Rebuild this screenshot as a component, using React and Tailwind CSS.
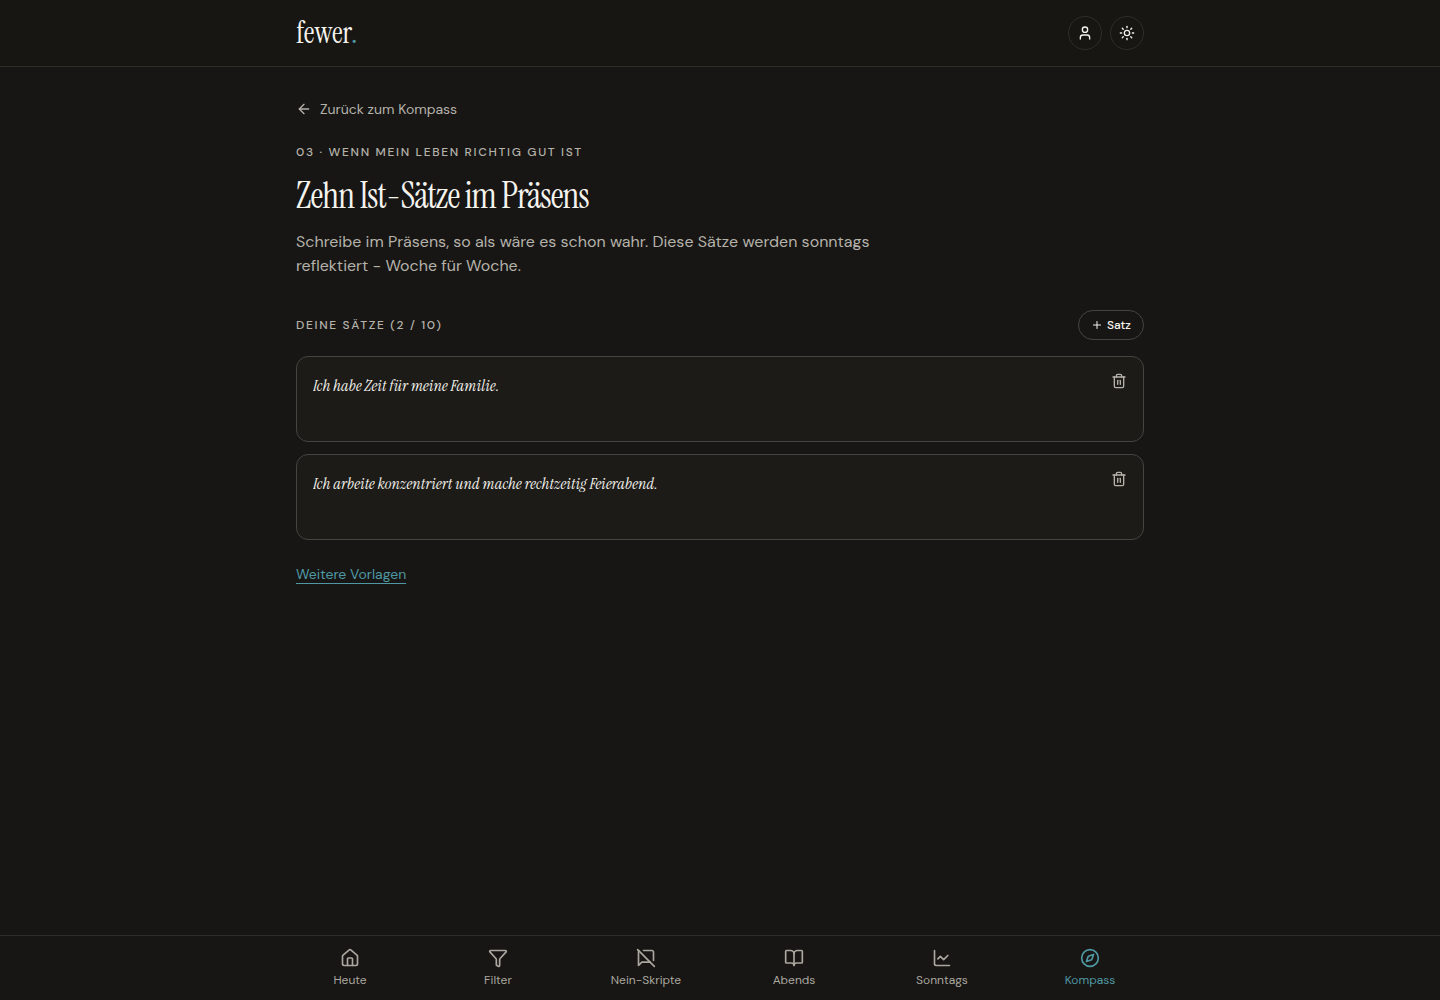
import { useState } from 'react';
import {
  ArrowLeft,
  BookOpen,
  ChartLine,
  Compass,
  Funnel,
  House,
  Plus,
  Sun,
  Trash2,
  User,
} from 'lucide-react';

function SpeechOff({ size, strokeWidth }) {
  return (
    <svg
      width={size}
      height={size}
      viewBox="0 0 24 24"
      fill="none"
      stroke="currentColor"
      strokeWidth={strokeWidth}
      strokeLinecap="round"
      strokeLinejoin="round"
      aria-hidden="true"
    >
      <path d="M21 15V5a2 2 0 0 0-2-2H9" />
      <path d="m2 2 20 20" />
      <path d="M3.6 3.6c-.4.3-.6.8-.6 1.4v16l4-4h10" />
    </svg>
  );
}

const NAV = [
  { label: 'Heute', icon: House },
  { label: 'Filter', icon: Funnel },
  { label: 'Nein-Skripte', icon: SpeechOff },
  { label: 'Abends', icon: BookOpen },
  { label: 'Sonntags', icon: ChartLine },
  { label: 'Kompass', icon: Compass, active: true },
];

function RoundButton({ label, icon: Icon }) {
  return (
    <button
      type="button"
      aria-label={label}
      className="flex size-[34px] items-center justify-center rounded-full border border-[#2e2d2a] text-[#f5f3ee]"
    >
      <Icon size={16} strokeWidth={2} />
    </button>
  );
}

function Sentence({ index, value, onChange, onRemove }) {
  return (
    <li className="flex items-start gap-3 rounded-xl border border-[#454440] bg-[#1c1b17] p-4">
      <textarea
        aria-label={`Satz ${index + 1}`}
        rows={2}
        value={value}
        onChange={(e) => onChange(e.target.value)}
        className="block min-w-0 flex-1 resize-none bg-transparent font-['Instrument_Serif','Liberation_Serif',serif] text-base leading-[26px] tracking-[0.01em] text-[#f5f3ee] italic outline-none"
      />
      <button type="button" aria-label="Satz löschen" className="text-[#b5b2aa]" onClick={onRemove}>
        <Trash2 size={16} strokeWidth={2} />
      </button>
    </li>
  );
}

export default function App() {
  const [sentences, setSentences] = useState([
    'Ich habe Zeit für meine Familie.',
    'Ich arbeite konzentriert und mache rechtzeitig Feierabend.',
  ]);

  return (
    <div className="flex min-h-screen flex-col bg-[#171614] font-['DM_Sans',Inter,sans-serif] text-[#f5f3ee]">
      <header className="border-b border-[#2e2d2a] bg-[#171612]">
        <div className="mx-auto flex h-[66px] w-full max-w-[896px] items-center justify-between px-6">
          <a href="#" className="font-['Instrument_Serif','Liberation_Serif',serif] text-3xl">
            fewer<span className="text-[#4f98a3]">.</span>
          </a>
          <div className="flex gap-2">
            <RoundButton label="Profil" icon={User} />
            <RoundButton label="Helles Design" icon={Sun} />
          </div>
        </div>
      </header>

      <main className="mx-auto w-full max-w-[896px] flex-1 px-6 pt-8 pb-24">
        <a href="#" className="flex h-5 w-fit items-center gap-2 text-sm text-[#b5b2aa]">
          <ArrowLeft size={16} strokeWidth={2} />
          Zurück zum Kompass
        </a>
        <p className="mt-6 text-xs leading-[18px] font-medium tracking-[0.14em] text-[#b5b2aa] uppercase">
          03 · Wenn mein Leben richtig gut ist
        </p>
        <h1 className="mt-3 font-['Instrument_Serif','Liberation_Serif',serif] text-4xl leading-[45px] tracking-tight">
          Zehn Ist-Sätze im Präsens
        </h1>
        <p className="mt-3 max-w-[576px] text-base leading-6 text-[#b5b2aa]">
          Schreibe im Präsens, so als wäre es schon wahr. Diese Sätze werden sonntags reflektiert -
          Woche für Woche.
        </p>

        <div className="mt-8 flex items-center justify-between">
          <h2 className="text-xs leading-[18px] font-medium tracking-[0.14em] text-[#b5b2aa] uppercase">
            Deine Sätze ({sentences.length} / 10)
          </h2>
          <button
            type="button"
            onClick={() => setSentences([...sentences, ''])}
            className="flex h-[30px] items-center gap-1 rounded-full border border-[#454440] px-3 text-xs font-medium"
          >
            <Plus size={12} strokeWidth={2} />
            Satz
          </button>
        </div>
        <ul className="mt-4 flex flex-col gap-3">
          {sentences.map((text, i) => (
            <Sentence
              key={i}
              index={i}
              value={text}
              onChange={(v) => setSentences(sentences.map((s, j) => (j === i ? v : s)))}
              onRemove={() => setSentences(sentences.filter((_, j) => j !== i))}
            />
          ))}
        </ul>
        <button type="button" className="mt-6 text-sm text-[#4f98a3] underline underline-offset-4">
          Weitere Vorlagen
        </button>
      </main>

      <nav className="sticky bottom-0 border-t border-[#2e2d2a] bg-[#171614]">
        <ul className="mx-auto grid h-16 w-full max-w-[896px] grid-cols-6 px-1">
          {NAV.map(({ label, icon: Icon, active }) => (
            <li key={label}>
              <a
                href="#"
                aria-current={active ? 'page' : undefined}
                className={`flex flex-col items-center gap-1 pt-3 text-xs leading-4 ${active ? 'text-[#4f98a3]' : 'text-[#aaa79f]'}`}
              >
                <Icon size={20} strokeWidth={2} />
                {label}
              </a>
            </li>
          ))}
        </ul>
      </nav>
    </div>
  );
}
